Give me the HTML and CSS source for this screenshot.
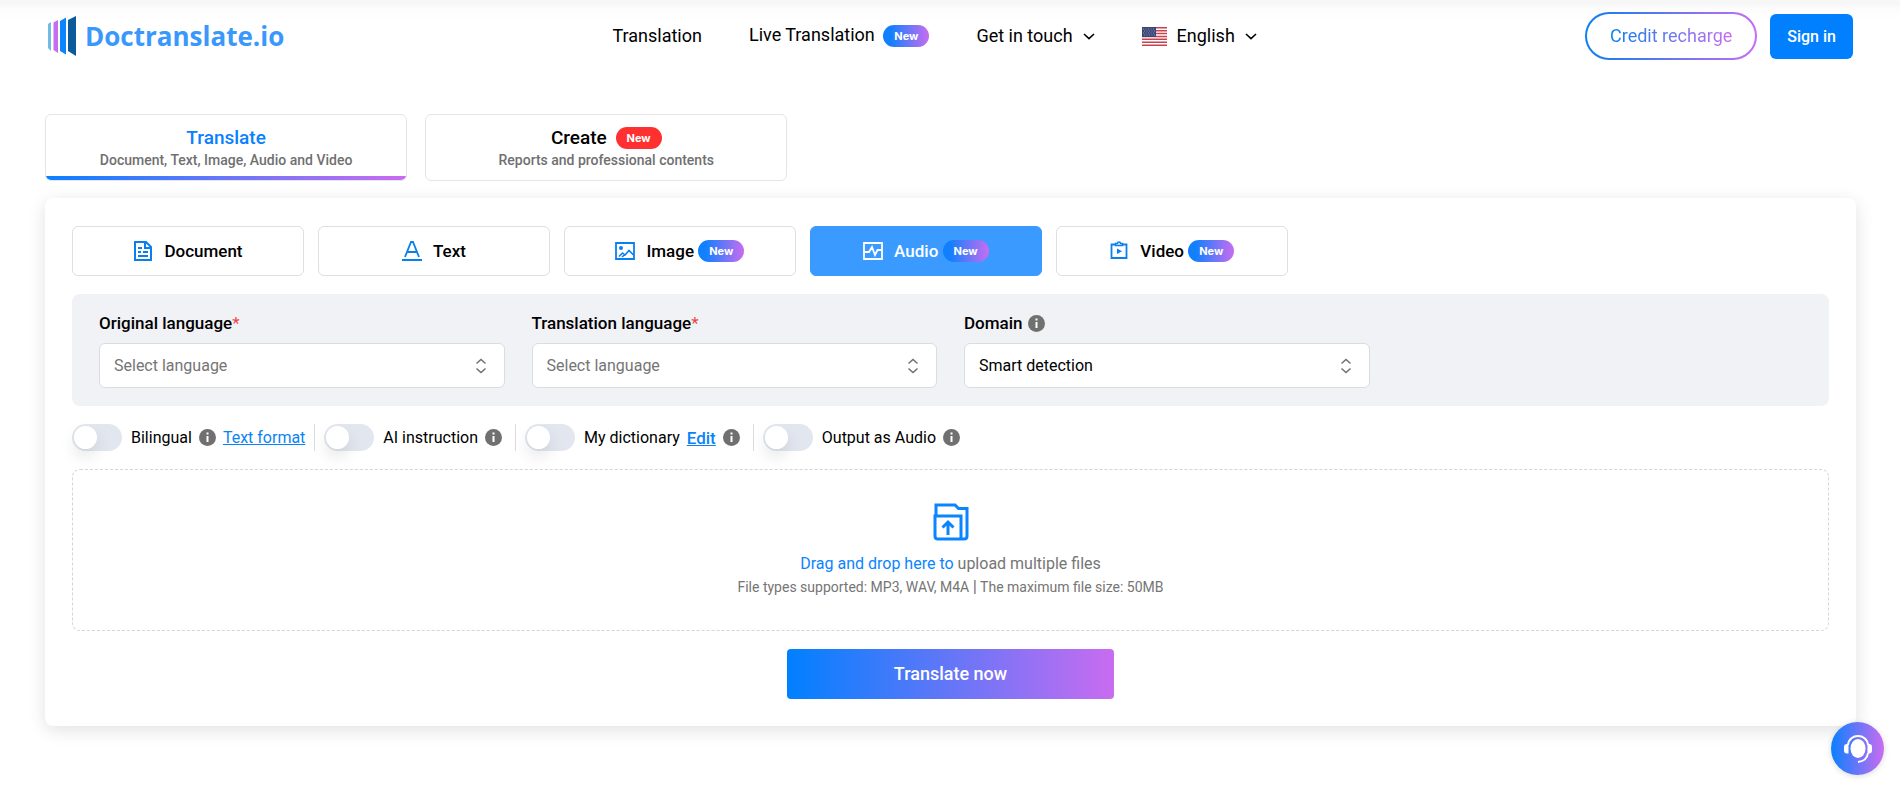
FILE: index.html
```html
<!DOCTYPE html>
<html lang="en">
<head>
<meta charset="utf-8">
<title>Doctranslate.io</title>
<link rel="stylesheet" href="styles.css">
</head>
<body>
<svg class="defs" aria-hidden="true">
  <symbol id="info" viewBox="0 0 17 17"><circle cx="8.500" cy="8.500" r="8.500" fill="#707070"/><path d="M7.500 3.500h2v2h-2zM7.500 7h2v6h-2z" fill="#fff"/></symbol>
  <symbol id="down" viewBox="0 0 12 12"><path d="M1 4l5 4.600L11 4" fill="none" stroke="currentColor" stroke-width="1.600"/></symbol>
  <symbol id="updown" viewBox="0 0 12 16"><path d="M1.500 5.500L6 1.500l4.500 4M1.500 10.500l4.500 4 4.500-4" fill="none" stroke="#707070" stroke-width="1.500"/></symbol>
</svg>
<header class="header">
  <a class="logo" href="#">
    <svg class="logo-mark" viewBox="0 0 28 40" aria-hidden="true"><path d="M0 8l3-2v29l-3-3z" fill="#6fbce0"/><path d="M5.500 6.500L10 4v33l-4.500-3z" fill="#c56cf0"/><path d="M12 5l6-3.500v37L12 35z" fill="#0a84ff"/><path d="M20 4l8-4v40l-8-5z" fill="#0a5a9c"/></svg>
    <span>Doctranslate.io</span>
  </a>
  <nav class="nav">
    <a href="#">Translation</a>
    <a class="live" href="#">Live Translation <span class="badge">New</span></a>
    <button class="menu" type="button">Get in touch <svg class="down"><use href="#down"/></svg></button>
    <button class="menu" type="button">
      <svg class="flag" viewBox="0 0 25 19" aria-hidden="true"><path fill="#fff" d="M0 0h25v19H0z"/><path d="M0 .75h25M0 3.650h25M0 6.550h25M0 9.450h25M0 12.350h25M0 15.250h25M0 18.200h25" stroke="#c8414f" stroke-width="1.500"/><path fill="#3a4674" d="M0 0h14v10H0z"/><path d="M1 2h12M2 4h12M1 6h12M2 8h12" stroke="#8b93b5" stroke-width="1" stroke-dasharray="1 1.500"/></svg>
      English <svg class="down"><use href="#down"/></svg></button>
  </nav>
  <div class="account">
    <button class="credit" type="button"><span>Credit recharge</span></button>
    <button class="signin" type="button">Sign in</button>
  </div>
</header>
<main class="main">
  <div class="tabs">
    <button class="tab tab-active" type="button"><span class="tab-title">Translate</span><span class="tab-sub">Document, Text, Image, Audio and Video</span></button>
    <button class="tab" type="button"><span class="tab-title">Create <span class="badge badge-red">New</span></span><span class="tab-sub">Reports and professional contents</span></button>
  </div>
  <section class="panel">
    <div class="modes">
      <button class="mode" type="button"><svg class="mode-icon" viewBox="0 0 20 20"><path d="M2 1h11l5 5v13H2zM12 1v6h6M5 7h4M5 11h3M10 11h5M5 15h10" fill="none" stroke="currentColor" stroke-width="2"/></svg>Document</button>
      <button class="mode" type="button"><svg class="mode-icon" viewBox="0 0 20 20"><path d="M3 16L9 1h2l6 15M5.500 11h9" fill="none" stroke="currentColor" stroke-width="1.800"/><path d="M0 18h20v2H0z" fill="currentColor"/></svg>Text</button>
      <button class="mode" type="button"><svg class="mode-icon" viewBox="0 0 20 20"><path d="M1 2h18v16H1z" fill="none" stroke="currentColor" stroke-width="1.800"/><circle cx="6" cy="7" r="2" fill="currentColor"/><path d="M4 15.500l3.500-3.500 2.500 2 4-4.500 4.500 4.500M7 16l3-2.500" fill="none" stroke="currentColor" stroke-width="1.600"/></svg><span>Image <span class="badge">New</span></span></button>
      <button class="mode mode-active" type="button"><svg class="mode-icon" viewBox="0 0 20 20"><path d="M1 2h18v16H1zM1 11h5l3-5 3 8 2.500-5H19" fill="none" stroke="currentColor" stroke-width="1.800"/></svg><span>Audio <span class="badge">New</span></span></button>
      <button class="mode" type="button"><svg class="mode-icon" viewBox="0 0 20 20"><path d="M2.500 3.500h15v13.500h-15z" fill="none" stroke="currentColor" stroke-width="1.800"/><path d="M6.500 2.500h2a1.500 1.500 0 0 1 3 0h2v2h-7z" fill="#fff" stroke="currentColor" stroke-width="1.500"/><path d="M8 7.500l5 2.800L8 13z" fill="currentColor"/></svg><span>Video <span class="badge">New</span></span></button>
    </div>
    <div class="fields">
      <div class="field">
        <label for="source">Original language<span class="required">*</span></label>
        <div class="select-box"><select class="empty" id="source"><option>Select language</option></select><svg class="updown"><use href="#updown"/></svg></div>
      </div>
      <div class="field">
        <label for="target">Translation language<span class="required">*</span></label>
        <div class="select-box"><select class="empty" id="target"><option>Select language</option></select><svg class="updown"><use href="#updown"/></svg></div>
      </div>
      <div class="field">
        <label for="domain">Domain <svg class="info"><use href="#info"/></svg></label>
        <div class="select-box"><select id="domain"><option>Smart detection</option></select><svg class="updown"><use href="#updown"/></svg></div>
      </div>
    </div>
    <div class="options">
      <div class="option"><input class="toggle" type="checkbox" id="bilingual"><label for="bilingual">Bilingual</label><svg class="info"><use href="#info"/></svg><a href="#">Text format</a></div>
      <div class="option"><input class="toggle" type="checkbox" id="instruction"><label for="instruction">AI instruction</label><svg class="info"><use href="#info"/></svg></div>
      <div class="option"><input class="toggle" type="checkbox" id="dictionary"><label for="dictionary">My dictionary</label><a class="edit" href="#">Edit</a><svg class="info"><use href="#info"/></svg></div>
      <div class="option"><input class="toggle" type="checkbox" id="output"><label for="output">Output as Audio</label><svg class="info"><use href="#info"/></svg></div>
    </div>
    <label class="drop">
      <input class="file" type="file" multiple>
      <svg class="upload" viewBox="0 0 36 38" aria-hidden="true"><path d="M3 13V2h19l3.500 3.500H34V33q0 3-3 3H5q-3 0-3-3V13h26v22" fill="none" stroke="#0a84ff" stroke-width="3"/><path d="M15 32V20M9.500 24.500L15 19l5.500 5.500" fill="none" stroke="#0a84ff" stroke-width="3"/></svg>
      <span class="drop-title"><span class="blue">Drag and drop here to</span> upload multiple files</span>
      <span class="drop-sub">File types supported: MP3, WAV, M4A <span class="bar">|</span> The maximum file size: 50MB</span>
    </label>
    <button class="submit" type="button">Translate now</button>
  </section>
</main>
<button class="chat" type="button" aria-label="Support chat">
  <svg viewBox="0 0 28 28" aria-hidden="true"><ellipse cx="14" cy="13.500" rx="7.500" ry="9.500" fill="#fff"/><path d="M4 10C5 -2 23 -2 24 10M24 18q-1 8-10 9" fill="none" stroke="#fff" stroke-width="2"/><path d="M4.500 9v9.500H3q-3 0-3-3V12q0-3 3-3zM23.500 9v9.500H25q3 0 3-3V12q0-3-3-3z" fill="#fff"/></svg>
</button>
</body>
</html>
```
FILE: styles.css
```css
* { box-sizing: border-box; }
body { margin: 0; background: #fff; color: #000; font: 16px/20px Roboto, "Liberation Sans", sans-serif; }
button, select { font: inherit; color: inherit; cursor: pointer; }
button { padding: 0; border: 0; background: none; }
a { color: inherit; text-decoration: none; }
svg { flex: none; }
.defs { position: absolute; width: 0; height: 0; }

.header { display: flex; align-items: center; justify-content: space-between; height: 72px; padding: 0 47px 0 48px; background: linear-gradient(#f7f7f7 4px, #fcfcfc 8px, #fff 20px); }
.logo { display: flex; align-items: center; gap: 9px; color: #3a98fc; font: bold 26px/32px "Open Sans", sans-serif; }
.logo-mark { width: 28px; height: 40px; }
.nav { display: flex; align-items: center; gap: 47px; font-size: 18px; }
.nav .badge { margin-left: 4px; }
.menu { display: flex; align-items: center; gap: 10px; }
.down { width: 12px; height: 12px; }
.flag { width: 25px; height: 19px; }
.badge { display: inline-block; padding: 0 11px; border-radius: 12px; background: linear-gradient(90deg, #1080ff 15%, #c96cf0); color: #fff; font: bold 11px/22px Inter, sans-serif; vertical-align: middle; }
.badge-red { background: #ff3030; }
.account { display: flex; align-items: center; gap: 13px; }
.credit { padding: 12px 23px; border: 2px solid transparent; border-radius: 24px; background: linear-gradient(#fff, #fff) padding-box, linear-gradient(90deg, #0a80ee, #c96cf0) border-box; font-size: 18px; }
.credit span { background: linear-gradient(90deg, #0a80ee, #c96cf0); background-clip: text; color: transparent; }
.signin { padding: 12px 17px; border-radius: 6px; background: #0080ff; color: #fff; font-weight: 500; line-height: 21px; }

.main { padding: 42px 44px 69px 45px; }
.tabs { display: flex; gap: 18px; }
.tab { position: relative; display: flex; flex-direction: column; align-items: center; width: 20%; height: 67px; padding-top: 12px; border: 1px solid #e5e5e5; border-radius: 6px; overflow: hidden; }
.tab-title { font-size: 19px; font-weight: 500; line-height: 22px; }
.tab-title .badge { margin-left: 4px; vertical-align: top; }
.tab-sub { color: #707070; font-size: 14px; font-weight: 500; line-height: 22px; }
.tab-active .tab-title { color: #0a80ff; }
.tab-active::after { content: ""; position: absolute; left: 0; right: 0; bottom: 0; height: 4px; background: linear-gradient(90deg, #0a80ff, #c96cf0); }

.panel { display: flex; flex-direction: column; gap: 18px; margin-top: 17px; padding: 28px 27px 27px; border-radius: 8px; background: #fff; box-shadow: 0 4px 18px rgba(0, 0, 0, .12); }
.modes { display: flex; gap: 14px; }
.mode { display: flex; align-items: center; justify-content: center; gap: 11px; width: calc(14% - 14px); height: 50px; border: 1px solid #dcdfe3; border-radius: 6px; font-size: 17px; font-weight: 500; }
.mode-icon { width: 20px; height: 20px; color: #0a80f0; }
.mode .badge { vertical-align: top; line-height: 22px; }
.mode > span { line-height: 22px; }
.mode-active { border-color: #3a9aff; background: #3a9aff; color: #fff; }
.mode-active .mode-icon { color: #fff; }

.fields { display: grid; grid-template-columns: repeat(4, 1fr); gap: 27px; padding: 19px 27px 18px; border-radius: 8px; background: #f1f2f6; }
.field { display: flex; flex-direction: column; gap: 10px; }
.field label { display: flex; align-items: center; font-size: 17px; font-weight: 500; }
.required { color: #f04444; font-weight: 400; }
.info { width: 17px; height: 17px; }
.field .info { margin-left: 5px; }
.select-box { position: relative; }
.select-box select { display: block; width: 100%; height: 45px; padding: 0 14px; border: 1px solid #d9dce1; border-radius: 6px; background: #fff; appearance: none; }
.select-box .empty { color: #757575; }
.updown { position: absolute; top: 15px; right: 18px; width: 12px; height: 16px; pointer-events: none; }

.options { display: flex; gap: 19px; }
.option { position: relative; display: flex; align-items: center; gap: 7px; }
.option + .option::before { content: ""; position: absolute; top: 0; bottom: 0; left: -10px; width: 1px; background: #dcdcdc; }
.option .info:last-child { margin-right: 4px; }
.toggle { position: relative; width: 50px; height: 27px; margin: 0 2px 0 0; border-radius: 14px; background: #e2e7ef; appearance: none; cursor: pointer; }
.toggle::before { content: ""; position: absolute; top: 2px; left: 2px; width: 23px; height: 23px; border-radius: 50%; background: #fff; box-shadow: 0 8px 16px rgba(0, 0, 0, .1); }
.toggle:checked::before { left: 25px; }
.option a { color: #0a84f5; text-decoration: underline; }
.option .edit { font-size: 17px; font-weight: 500; }

.drop { display: flex; flex-direction: column; align-items: center; padding: 33px 20px 32px; border: 1px dashed #d5d5d5; border-radius: 8px; color: #757575; cursor: pointer; }
.file { position: absolute; width: 1px; height: 1px; opacity: 0; }
.upload { width: 36px; height: 38px; margin-bottom: 11px; }
.drop-title { line-height: 24px; }
.drop-sub { font-size: 14px; line-height: 21px; }
.bar { font-size: 17px; }
.blue { color: #0a84ff; }
.submit { align-self: center; width: 327px; height: 50px; border-radius: 4px; background: linear-gradient(90deg, #0080ff, #c96cf0); color: #fff; font-size: 18px; font-weight: 500; }

.chat { position: fixed; right: 16px; bottom: 21px; display: flex; align-items: center; justify-content: center; width: 53px; height: 53px; border-radius: 50%; background: linear-gradient(90deg, #0a80ff, #c96cf0); box-shadow: 0 1px 6px rgba(0, 0, 0, .15); }
.chat svg { width: 28px; height: 28px; }
```
